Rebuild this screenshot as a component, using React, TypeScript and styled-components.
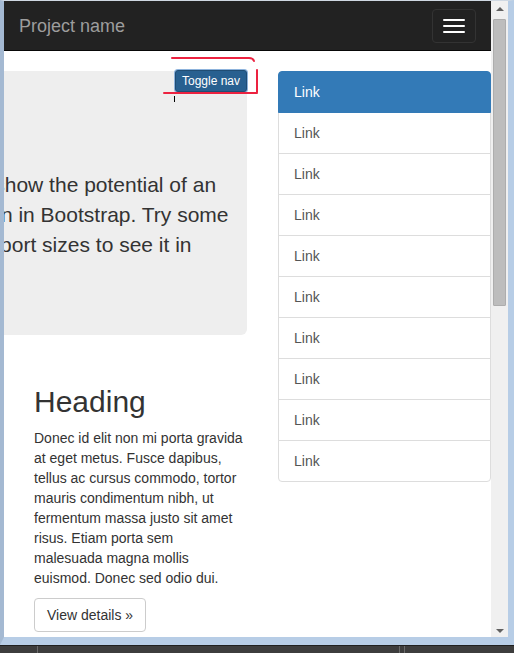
import styled, { createGlobalStyle } from "styled-components";

const GlobalStyle = createGlobalStyle`
  html, body {
    margin: 0;
    padding: 0;
    background: #3a3a3a;
  }
  * {
    box-sizing: border-box;
  }
`;

const Screen = styled.div`
  width: 514px;
  height: 653px;
  overflow: hidden;
  background: #3a3a3a;
  display: flex;
  flex-direction: column;
  font-family: "Liberation Sans", Arial, sans-serif;
`;

const Window = styled.div`
  display: flex;
  height: 645px;
  flex-shrink: 0;
  border-top: 1px solid #cfd8e2;
  border-left: 4px solid #a4b9d2;
  border-right: 6px solid #b7cde6;
  border-bottom: 8px solid #b7cde6;
`;

const Viewport = styled.div`
  position: relative;
  width: 487px;
  height: 636px;
  overflow: hidden;
  background: #fff;
  color: #333;
  font-size: 14px;
  line-height: 20px;
`;

const Navbar = styled.div`
  height: 50px;
  background: #222;
  border-bottom: 1px solid #080808;
  display: flex;
  align-items: center;
  justify-content: space-between;
  padding: 0 15px;
`;

const Brand = styled.a`
  font-size: 18px;
  line-height: 20px;
  color: #9d9d9d;
  text-decoration: none;
`;

const NavToggle = styled.button`
  width: 44px;
  height: 34px;
  margin-top: 1px;
  border: 1px solid #333;
  border-radius: 4px;
  background: transparent;
  display: flex;
  flex-direction: column;
  align-items: center;
  justify-content: center;
  gap: 4px;
  padding: 0;
`;

const IconBar = styled.span`
  display: block;
  width: 22px;
  height: 2px;
  border-radius: 1px;
  background: #fff;
`;

const Main = styled.div`
  display: flex;
  padding-top: 20px;
`;

const MainColumn = styled.div`
  position: relative;
  width: 243px;
  flex-shrink: 0;
  display: flex;
  flex-direction: column;
`;

const ToggleButton = styled.button`
  position: absolute;
  top: -1px;
  right: 0;
  z-index: 3;
  padding: 1px 6px;
  font-family: inherit;
  font-size: 12px;
  line-height: 18px;
  color: #fff;
  background: #286090;
  border: 1px solid #204d74;
  border-radius: 3px;
  box-shadow: 0 0 0 1px #8db3dc;
`;

const Jumbotron = styled.div`
  width: 472px;
  margin-left: -229px;
  margin-bottom: 30px;
  padding: 30px 9px 30px 15px;
  background: #eee;
  border-radius: 6px;
`;

const JumboTitle = styled.h1`
  margin: 20px 0 10px;
  font-size: 36px;
  line-height: 39px;
  font-weight: 500;
`;

const Lead = styled.p`
  margin: 0 0 15px;
  font-size: 21px;
  line-height: 30px;
`;

const Teaser = styled.div`
  padding-left: 30px;
`;

const TeaserTitle = styled.h2`
  margin: 20px 0 10px;
  font-size: 30px;
  line-height: 33px;
  font-weight: 500;
`;

const TeaserText = styled.p`
  width: 210px;
  margin: 0 0 10px;
`;

const DetailsButton = styled.a`
  display: inline-block;
  padding: 6px 12px;
  border: 1px solid #ccc;
  border-radius: 4px;
  background: #fff;
  color: #333;
  font-size: 14px;
  line-height: 20px;
  text-decoration: none;
`;

const Sidebar = styled.div`
  width: 213px;
  margin-left: 31px;
  flex-shrink: 0;
`;

const ListGroup = styled.div`
  display: flex;
  flex-direction: column;
`;

const ListItem = styled.a<{ $active?: boolean }>`
  position: relative;
  display: block;
  padding: 10px 15px;
  margin-bottom: -1px;
  border: 1px solid ${(p) => (p.$active ? "#337ab7" : "#ddd")};
  background: ${(p) => (p.$active ? "#337ab7" : "#fff")};
  color: ${(p) => (p.$active ? "#fff" : "#555")};
  z-index: ${(p) => (p.$active ? 2 : 1)};
  text-decoration: none;
  &:first-child {
    border-top-left-radius: 4px;
    border-top-right-radius: 4px;
  }
  &:last-child {
    margin-bottom: 0;
    border-bottom-left-radius: 4px;
    border-bottom-right-radius: 4px;
  }
`;

const Annotation = styled.svg`
  position: absolute;
  top: 0;
  left: 0;
  width: 487px;
  height: 636px;
  pointer-events: none;
  z-index: 5;
`;

const Scrollbar = styled.div`
  width: 17px;
  height: 636px;
  background: #f0f0f0;
  display: flex;
  flex-direction: column;
`;

const ArrowButton = styled.div`
  height: 17px;
  flex-shrink: 0;
  display: flex;
  align-items: center;
  justify-content: center;
`;

const Arrow = styled.span<{ $down?: boolean }>`
  width: 0;
  height: 0;
  border-left: 4px solid transparent;
  border-right: 4px solid transparent;
  ${(p) =>
    p.$down
      ? "border-top: 4px solid #606060; margin-top: 4px;"
      : "border-bottom: 4px solid #606060; margin-bottom: 1px;"}
`;

const Track = styled.div`
  flex: 1;
  padding: 1px 2px 0;
`;

const Thumb = styled.div`
  height: 287px;
  background: #bdbdbd;
  border: 1px solid #adadad;
  border-radius: 1px;
`;

const Taskbar = styled.div`
  flex: 1;
  display: flex;
  background: #3d3d3d;
  border-top: 1px solid #1f1f1f;
`;

const TaskSlot = styled.div<{ $w: number }>`
  width: ${(p) => p.$w}px;
  border-right: 1px solid #6a6a6a;
`;

const links = Array.from({ length: 10 }, (_, i) => i);

export default function App() {
  return (
    <Screen>
      <GlobalStyle />
      <Window>
        <Viewport>
          <Navbar>
            <Brand href="#">Project name</Brand>
            <NavToggle aria-label="Toggle navigation">
              <IconBar />
              <IconBar />
              <IconBar />
            </NavToggle>
          </Navbar>
          <Main>
            <MainColumn>
              <ToggleButton>Toggle nav</ToggleButton>
              <Jumbotron>
                <JumboTitle>Hello, world!</JumboTitle>
                <Lead>
                  This is an example to show the potential of an offcanvas
                  layout pattern in Bootstrap. Try some responsive-range
                  viewport sizes to see it in action.
                </Lead>
              </Jumbotron>
              <Teaser>
                <TeaserTitle>Heading</TeaserTitle>
                <TeaserText>
                  Donec id elit non mi porta gravida at eget metus. Fusce
                  dapibus, tellus ac cursus commodo, tortor mauris condimentum
                  nibh, ut fermentum massa justo sit amet risus. Etiam porta
                  sem malesuada magna mollis euismod. Donec sed odio dui.
                </TeaserText>
                <DetailsButton href="#">View details &raquo;</DetailsButton>
              </Teaser>
            </MainColumn>
            <Sidebar>
              <ListGroup>
                {links.map((i) => (
                  <ListItem key={i} href="#" $active={i === 0}>
                    Link
                  </ListItem>
                ))}
              </ListGroup>
            </Sidebar>
          </Main>
          <Annotation viewBox="0 0 487 636">
            <g
              fill="none"
              stroke="#ec2240"
              strokeWidth="2"
              strokeLinecap="round"
            >
              <path d="M168 57 L245 57 Q249 57 250 60" />
              <path d="M253 69 L253 91" />
              <path d="M160 92 L253 92" />
            </g>
            <path d="M170.5 95 L170.5 101" stroke="#000" strokeWidth="1" />
          </Annotation>
        </Viewport>
        <Scrollbar>
          <ArrowButton>
            <Arrow />
          </ArrowButton>
          <Track>
            <Thumb />
          </Track>
          <ArrowButton>
            <Arrow $down />
          </ArrowButton>
        </Scrollbar>
      </Window>
      <Taskbar>
        <TaskSlot $w={38} />
        <TaskSlot $w={362} />
        <TaskSlot $w={5} />
      </Taskbar>
    </Screen>
  );
}
